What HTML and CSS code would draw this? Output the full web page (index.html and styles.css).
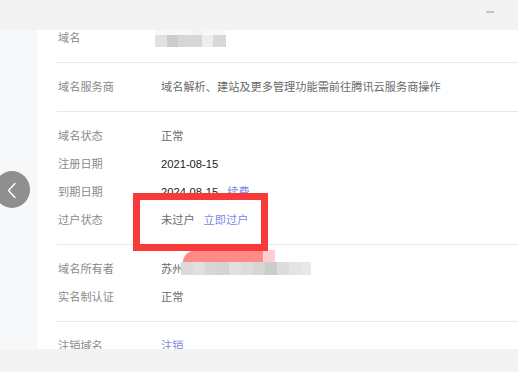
FILE: index.html
```html
<!DOCTYPE html>
<html lang="zh-CN">
<head>
<meta charset="utf-8">
<link rel="stylesheet" href="styles.css">
</head>
<body>
<div class="app">
  <div class="topbar"><span class="minimize"></span></div>
  <div class="middle">
    <div class="side"></div>
    <div class="main">
      <div class="list">
        <div class="group first">
          <div class="row"><span class="label">域名</span><span class="value"></span></div>
        </div>
        <div class="group">
          <div class="row"><span class="label">域名服务商</span><span class="value">域名解析、建站及更多管理功能需前往腾讯云服务商操作</span></div>
        </div>
        <div class="group">
          <div class="row"><span class="label">域名状态</span><span class="value">正常</span></div>
          <div class="row"><span class="label">注册日期</span><span class="value dark">2021-08-15</span></div>
          <div class="row"><span class="label">到期日期</span><span class="value dark">2024-08-15<a class="link spaced">续费</a></span></div>
          <div class="row"><span class="label">过户状态</span><span class="value">未过户<a class="link spaced">立即过户</a></span></div>
        </div>
        <div class="group">
          <div class="row"><span class="label">域名所有者</span><span class="value">苏州</span></div>
          <div class="row"><span class="label">实名制认证</span><span class="value">正常</span></div>
        </div>
        <div class="group">
          <div class="row"><span class="label">注销域名</span><span class="value"><a class="link">注销</a></span></div>
        </div>
      </div>
    </div>
  </div>
  <div class="bottombar"></div>

  <div class="mosaic mosaic-domain">
    <div class="mrow faint"><span class="c w12"></span><span class="c w24"></span><span class="c w12 l2"></span><span class="c w22"></span></div>
    <div class="mrow"><span class="c w12 g1"></span><span class="c w11 g2"></span><span class="c w24 g3"></span><span class="c w11 g4"></span><span class="c w13 g5"></span></div>
  </div>

  <div class="mosaic mosaic-owner">
    <div class="mrow pinkrow"><span class="pink"></span><span class="pink-light"></span></div>
    <div class="mrow greys">
      <span class="c w12 g6"></span><span class="c w12 g7"></span><span class="c w12 g3"></span><span class="c w12 g8"></span><span class="c w12 g7"></span><span class="c w12 g9"></span><span class="c w12 g3"></span><span class="c w12 g2"></span><span class="c w12 g9"></span><span class="c w12 g10"></span><span class="c w10 g11"></span>
    </div>
  </div>

  <div class="highlight"></div>

  <button class="back" aria-label="返回">
    <svg width="36" height="36" viewBox="0 0 36 36"><path d="M21 11.5 L14.5 18.5 L21 25.5" fill="none" stroke="#fff" stroke-width="1.4" stroke-linecap="round" stroke-linejoin="round"/></svg>
  </button>
</div>
</body>
</html>
```

FILE: styles.css
```css
* { box-sizing: border-box; margin: 0; padding: 0; }
html, body { width: 518px; height: 372px; overflow: hidden; }
body {
  font-family: "Liberation Sans", "Noto Sans CJK SC", sans-serif;
  font-size: 11.2px;
  background: #f3f3f3;
}
.app {
  position: relative;
  width: 518px;
  height: 372px;
  display: flex;
  flex-direction: column;
}
.topbar {
  height: 30px;
  background: #f3f3f3;
  position: relative;
  flex: none;
  z-index: 2;
}
.minimize {
  position: absolute;
  left: 486px;
  top: 11px;
  width: 8px;
  height: 2px;
  background: #c2c2c2;
}
.middle {
  flex: none;
  height: 319px;
  display: flex;
}
.side {
  width: 37px;
  background: #f7f8fa;
}
.main {
  flex: 1;
  background: #fff;
  overflow: hidden;
  padding-left: 20px;
}
.list {
  margin-top: -16px;
}
.group {
  padding: 10px 0;
  border-top: 1px solid #e8e8e8;
}
.group.first { border-top: none; }
.row {
  display: flex;
  height: 28px;
  line-height: 28px;
  padding-left: 1px;
  white-space: nowrap;
}
.label {
  width: 103px;
  color: #8a8a8a;
}
.value {
  color: #6a6a6a;
}
.value.dark { color: #1e1e1e; }
.link {
  color: #7c87e4;
  text-decoration: none;
}
.link.spaced { margin-left: 9px; }
.bottombar {
  flex: 1;
  background: #f3f3f3;
}
.mosaic {
  position: absolute;
  display: flex;
  flex-direction: column;
  z-index: 1;
}
.mosaic-domain { left: 155px; top: 24px; }
.mosaic-owner { left: 181px; top: 250px; }
.mrow { display: flex; height: 11px; }
.mosaic-domain .mrow { height: 11px; }
.mosaic-domain .mrow + .mrow { height: 12px; }
.mosaic-owner .mrow { height: 12px; }
.mosaic-owner .mrow + .mrow { height: 13px; }
.faint .c { background: #f8f8f8; }
.faint .l2 { background: #f3f3f3; }
.c { display: block; height: 100%; }
.w10 { width: 10px; }
.w11 { width: 11px; }
.w12 { width: 12px; }
.w13 { width: 13px; }
.w22 { width: 22px; }
.w24 { width: 24px; }
.g1 { background: #e2e1df; }
.g2 { background: #cccccd; }
.g3 { background: #d6d6d4; }
.g4 { background: #eeedeb; }
.g5 { background: #d6d9da; }
.g6 { background: #dadada; }
.g7 { background: #e0e0df; }
.g8 { background: #d4d4d4; }
.g9 { background: #dcdcdc; }
.g10 { background: #e4e4e4; }
.g11 { background: #e7e8ea; }
.pinkrow { padding-left: 2px; }
.pink {
  width: 80px;
  background: #ff8a8a;
  border-top-left-radius: 14px 12px;
}
.pink-light {
  width: 12px;
  background: #ffcfcf;
}
.highlight {
  position: absolute;
  left: 133px;
  top: 193px;
  width: 135px;
  height: 58px;
  border: 7px solid #f83a3a;
  z-index: 3;
}
.back {
  position: absolute;
  left: -6px;
  top: 171px;
  width: 36px;
  height: 37px;
  border: none;
  border-radius: 50%;
  background: #8f8f8f;
  display: flex;
  align-items: center;
  justify-content: center;
  z-index: 3;
}
.back svg { display: block; }
```
